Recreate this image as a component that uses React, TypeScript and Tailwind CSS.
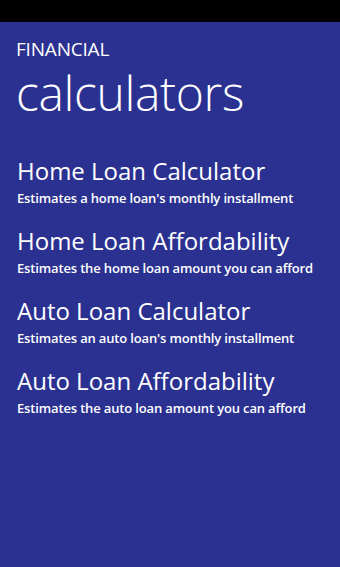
const items = [
  { title: "Home Loan Calculator", desc: "Estimates a home loan's monthly installment" },
  { title: "Home Loan Affordability", desc: "Estimates the home loan amount you can afford" },
  { title: "Auto Loan Calculator", desc: "Estimates an auto loan's monthly installment" },
  { title: "Auto Loan Affordability", desc: "Estimates the auto loan amount you can afford" },
];

export default function App() {
  return (
    <div className="flex h-[567px] w-[340px] flex-col bg-[#2b3190] font-['Open_Sans',sans-serif] text-white">
      <div className="h-[22px] bg-black" />
      <div className="pl-[16px] pt-[15px]">
        <p className="text-[19px] leading-[24px] tracking-[-0.2px]">FINANCIAL</p>
        <h1 className="mt-[6px] text-[48px] font-light leading-[52px] tracking-[-0.35px]">calculators</h1>
      </div>
      <ul className="mt-[37px] flex flex-col gap-[19px] pl-[17px]">
        {items.map((item) => (
          <li key={item.title} className="flex flex-col">
            <span className="text-[24px] leading-[30px]">{item.title}</span>
            <span className="mt-[3px] text-[13px] font-semibold leading-[18px] tracking-[-0.15px]">{item.desc}</span>
          </li>
        ))}
      </ul>
    </div>
  );
}
